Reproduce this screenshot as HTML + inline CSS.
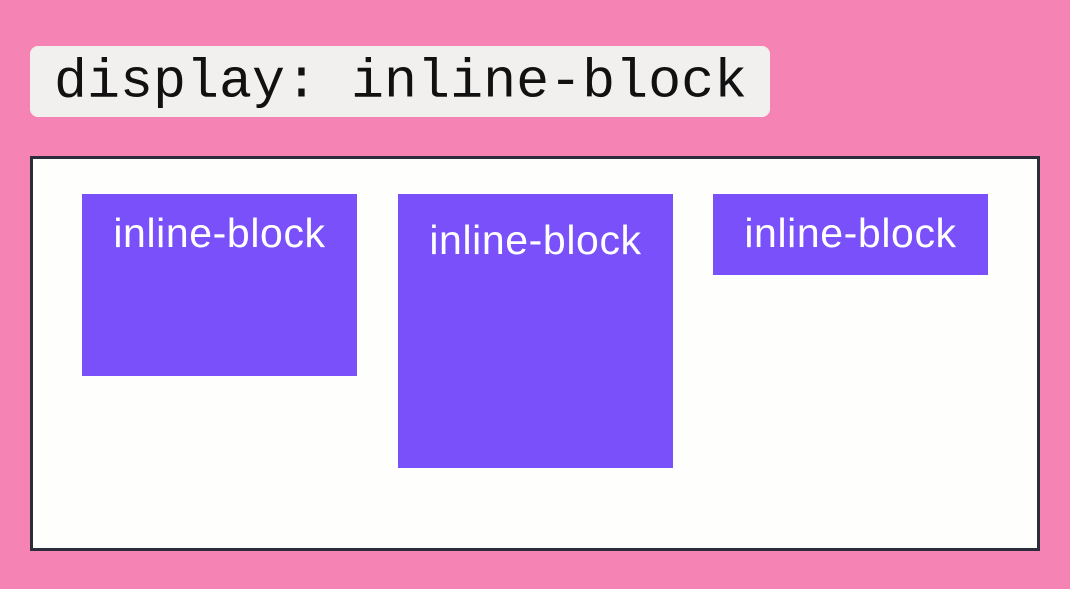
<!DOCTYPE html>
<html><head><style>
body{margin:0;width:1070px;height:589px;background:#f584b4;position:relative;overflow:hidden;font-family:"Liberation Sans",sans-serif}
.code{position:absolute;left:30px;top:46px;width:740px;height:71px;background:#f2f0ef;border-radius:8px}
.code span{position:absolute;left:24px;top:50%;transform:translateY(-50%);font-family:"Liberation Mono",monospace;font-size:55px;color:#111;white-space:nowrap}
.frame{position:absolute;left:30px;top:156px;width:1004px;height:389px;border:3px solid #2b2d3a;background:#fefefc}
.b{position:absolute;background:#7a50fb;color:#fff;font-size:41px;letter-spacing:0.6px;text-align:center;width:275px}
</style></head><body>
<div class="code"><span>display: inline-block</span></div>
<div class="frame"></div>
<div class="b" style="left:82px;top:194px;height:182px;line-height:78px">inline-block</div>
<div class="b" style="left:398px;top:194px;height:274px;line-height:92px">inline-block</div>
<div class="b" style="left:713px;top:194px;height:81px;line-height:78px">inline-block</div>
</body></html>
